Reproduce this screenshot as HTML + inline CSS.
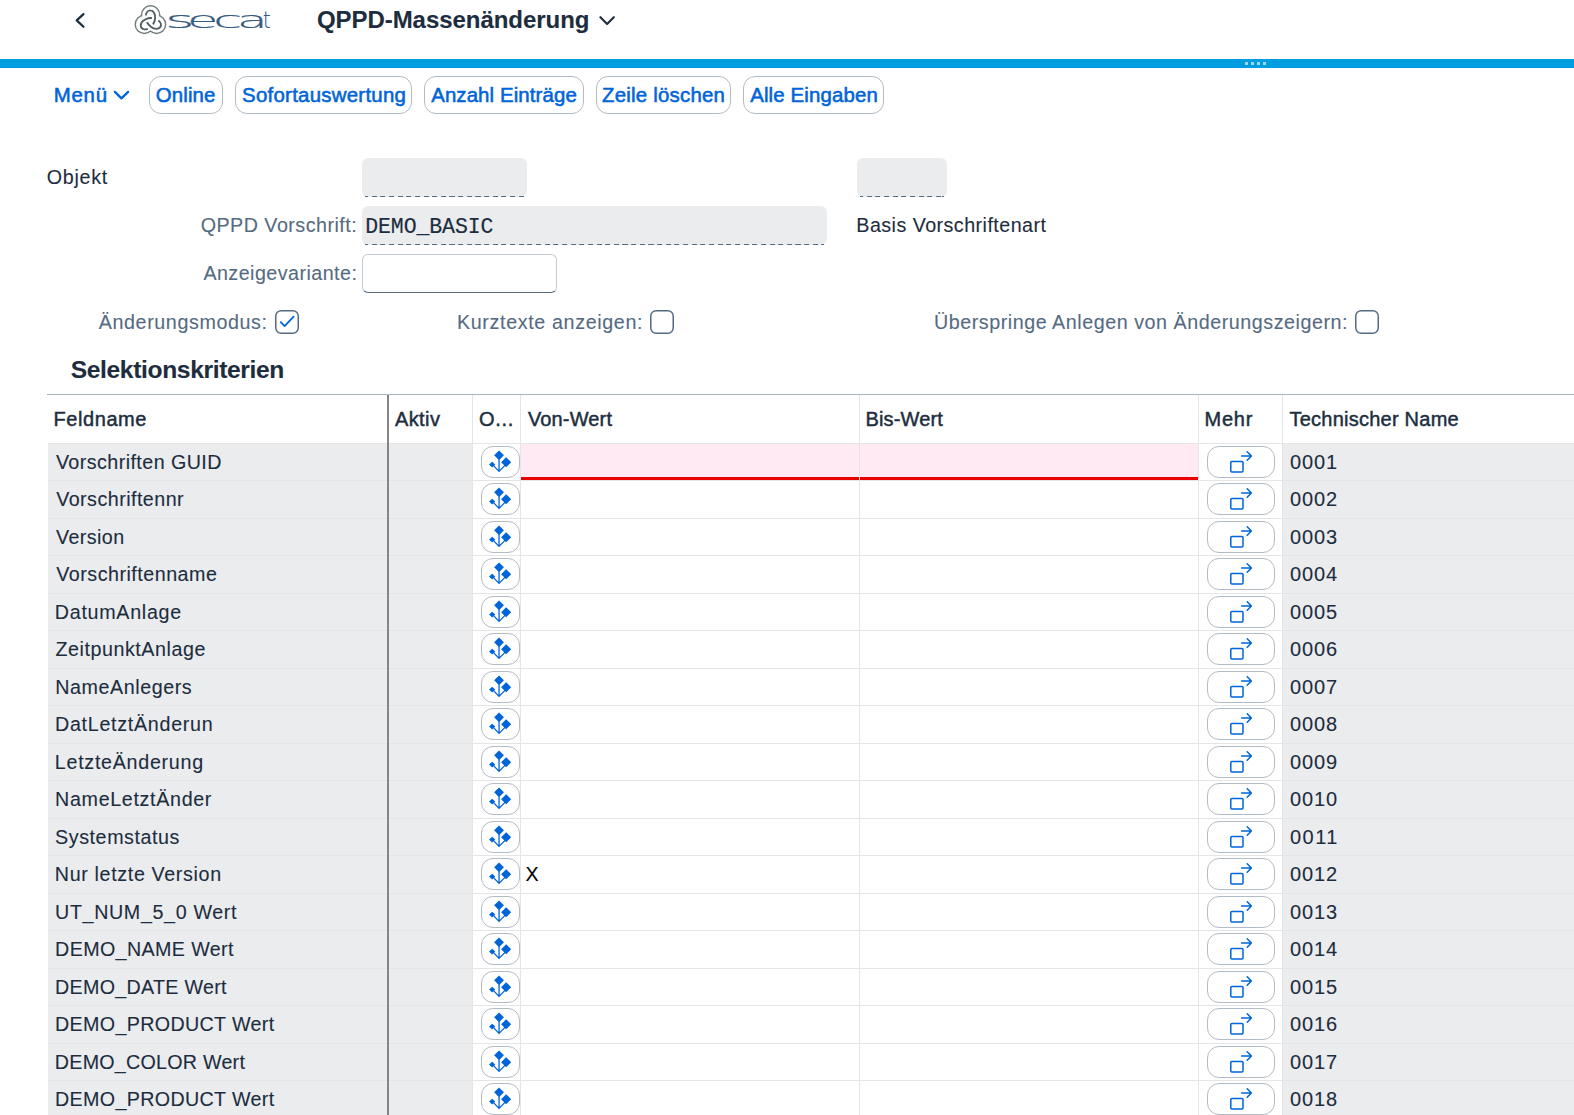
<!DOCTYPE html><html lang="de"><head><meta charset="utf-8"><title>QPPD-Massenänderung</title><style>
*{box-sizing:border-box;margin:0;padding:0}
html,body{width:1574px;height:1115px;overflow:hidden;background:#fff}
body{position:relative;font-family:"Liberation Sans",sans-serif;color:#1d2d3e}
.t{position:absolute;white-space:nowrap;font-size:20px;-webkit-text-stroke:0.1px currentColor}
.b{font-weight:bold}
.sb{-webkit-text-stroke:0.55px currentColor}
.hb{-webkit-text-stroke:0.45px currentColor}
.mono{font-family:"Liberation Mono",monospace;-webkit-text-stroke:0.15px currentColor}
.abs{position:absolute}
.logo{position:absolute;left:0;height:30px;line-height:30px;font-family:'DejaVu Sans Light','DejaVu Sans','Liberation Sans',sans-serif;font-weight:200;color:#34597f;white-space:nowrap;-webkit-text-stroke:0.2px #34597f}
.logo span{position:absolute;top:0;display:block;transform-origin:0 0}
.btn{position:absolute;border:1px solid #b3bbc4;border-radius:12px;background:#fff}
.ro{position:absolute;background:#eaecee;border-radius:6px}
.ro:after{content:"";position:absolute;left:3.2px;right:3px;bottom:0;height:1px;background:repeating-linear-gradient(90deg,#556b82 0,#556b82 5.1px,transparent 5.1px,transparent 8.65px);background-position:-1.9px 0}

.hl{position:absolute;left:48px;right:0;height:1px;background:#e5e5e5}
.vl{position:absolute;width:1px;background:#e5e5e5}
.g{position:absolute;background:#eaecee}
svg{position:absolute;overflow:visible}
</style></head><body>
<svg style="left:70px;top:8px" width="24" height="24" viewBox="70 8 24 24"><path d="M83.5 14.1 L76.7 20.4 L83.5 26.8" fill="none" stroke="#1d2d3e" stroke-width="2.2" stroke-linecap="round" stroke-linejoin="round"/></svg>
<svg style="left:130px;top:0" width="45" height="40" viewBox="130 0 45 40">
<g fill="#737c7e"><circle cx="150.6" cy="14.9" r="9.8"/><circle cx="144.35" cy="24.4" r="9.8"/><circle cx="156.55" cy="24.4" r="9.8"/></g>
<g fill="#fff"><circle cx="150.6" cy="14.9" r="8.4"/><circle cx="144.35" cy="24.4" r="8.4"/><circle cx="156.55" cy="24.4" r="8.4"/><circle cx="150.6" cy="21.3" r="6"/></g>
<g fill="none" stroke="#525d5e" stroke-width="1.9" stroke-linecap="butt" transform="translate(150.63 21.53)">
<path id="lp" d="M-4.84 -6.10 C-4.31 -9.33 -2.15 -11.30 -0.18 -11.12 C2.87 -10.94 5.02 -7.18 4.49 -3.23 C4.23 -0.72 3.41 1.44 2.33 2.87"/>
<use href="#lp" transform="rotate(120)"/><use href="#lp" transform="rotate(240)"/></g>
</svg>
<div class="logo" style="top:4.58px;font-size:22.6px"><span style="left:165.41px;transform:scaleX(2.523)">s</span><span style="left:187.44px;transform:scaleX(2.264)">e</span><span style="left:212.64px;transform:scaleX(2.367)">c</span><span style="left:236.93px;transform:scaleX(2.219)">a</span><span style="left:263.41px;transform:scaleX(0.855)">t</span></div>
<svg style="left:598px;top:14px" width="18" height="14" viewBox="598 14 18 14"><path d="M600.4 17.2 L607.1 23.9 L613.8 17.2" fill="none" stroke="#1d2d3e" stroke-width="2.1" stroke-linecap="round" stroke-linejoin="round"/></svg>
<div class="abs" style="left:0;top:59px;width:1574px;height:9px;background:#009de0"></div>
<div class="abs" style="left:1245px;top:62px;width:3px;height:3px;background:#9fd8f2"></div>
<div class="abs" style="left:1251px;top:62px;width:3px;height:3px;background:#9fd8f2"></div>
<div class="abs" style="left:1257px;top:62px;width:3px;height:3px;background:#9fd8f2"></div>
<div class="abs" style="left:1263px;top:62px;width:3px;height:3px;background:#9fd8f2"></div>
<div class="btn" style="left:149px;top:76px;width:74px;height:38px"></div>
<div class="btn" style="left:235px;top:76px;width:177px;height:38px"></div>
<div class="btn" style="left:424px;top:76px;width:160px;height:38px"></div>
<div class="btn" style="left:596px;top:76px;width:135px;height:38px"></div>
<div class="btn" style="left:743px;top:76px;width:141px;height:38px"></div>
<svg style="left:112px;top:88px" width="20" height="14" viewBox="112 88 20 14"><path d="M114.9 91.9 L121.5 98.4 L128.1 91.9" fill="none" stroke="#0064d9" stroke-width="2.3" stroke-linecap="round" stroke-linejoin="round"/></svg>
<div class="ro" style="left:362px;top:158px;width:165px;height:39px"></div>
<div class="ro" style="left:857px;top:158px;width:90px;height:39px"></div>
<div class="ro" style="left:362px;top:206px;width:465px;height:39px"></div>
<div class="abs" style="left:362px;top:254px;width:195px;height:39px;border:1px solid #c3cad1;border-bottom:1px solid #556b82;border-radius:6px;background:#fff"></div>
<svg style="left:275px;top:310px" width="24" height="24"><rect x="0.75" y="0.75" width="22.5" height="22.5" rx="5.4" fill="#fff" stroke="#556b82" stroke-width="1.5"/></svg>
<svg style="left:275px;top:310px" width="24" height="24" viewBox="275 310 24 24"><path d="M280.8 322.1 L284.6 326.1 L293.6 316.6" fill="none" stroke="#0064d9" stroke-width="1.8" stroke-linecap="round" stroke-linejoin="round"/></svg>
<svg style="left:650px;top:310px" width="24" height="24"><rect x="0.75" y="0.75" width="22.5" height="22.5" rx="5.4" fill="#fff" stroke="#556b82" stroke-width="1.5"/></svg>
<svg style="left:1355px;top:310px" width="24" height="24"><rect x="0.75" y="0.75" width="22.5" height="22.5" rx="5.4" fill="#fff" stroke="#556b82" stroke-width="1.5"/></svg>
<div class="abs" style="left:47px;top:394px;width:1527px;height:1px;background:#a8b3bd"></div>
<div class="g" style="left:48px;top:443px;width:339px;height:672px"></div>
<div class="g" style="left:389px;top:443px;width:83px;height:672px"></div>
<div class="g" style="left:1283px;top:443px;width:291px;height:672px"></div>
<div class="abs" style="left:521px;top:444px;width:677px;height:36px;background:#ffeaf4;border-bottom:3px solid #e90000"></div>
<div class="hl" style="top:443px"></div>
<div class="hl" style="top:480px"></div>
<div class="hl" style="top:518px"></div>
<div class="hl" style="top:555px"></div>
<div class="hl" style="top:593px"></div>
<div class="hl" style="top:630px"></div>
<div class="hl" style="top:668px"></div>
<div class="hl" style="top:705px"></div>
<div class="hl" style="top:743px"></div>
<div class="hl" style="top:780px"></div>
<div class="hl" style="top:818px"></div>
<div class="hl" style="top:855px"></div>
<div class="hl" style="top:893px"></div>
<div class="hl" style="top:930px"></div>
<div class="hl" style="top:968px"></div>
<div class="hl" style="top:1005px"></div>
<div class="hl" style="top:1043px"></div>
<div class="hl" style="top:1080px"></div>
<div class="hl" style="top:1118px"></div>
<div class="vl" style="left:472px;top:395px;height:720px"></div>
<div class="vl" style="left:520px;top:395px;height:720px"></div>
<div class="vl" style="left:859px;top:395px;height:720px"></div>
<div class="vl" style="left:1198px;top:395px;height:720px"></div>
<div class="vl" style="left:1282px;top:395px;height:720px"></div>
<div class="abs" style="left:387px;top:395px;width:2px;height:720px;background:#858585"></div>
<svg width="0" height="0" style="left:0;top:0"><defs><g id="io"><g fill="#0064d9"><path d="M0 -12.9 L4.9 -8 L0 -3.1 L-4.9 -8Z"/><path d="M7.1 -6.1 L12.1 -1.1 L7.1 3.9 L2.1 -1.1Z"/><path d="M-6.9 -1.6 L-3.8 1.25 L-6.9 4.1 L-10.0 1.25Z"/></g><path d="M0 -4 L0 7.4 M-6.0 1.8 L0 8.0 L6.4 1.5" fill="none" stroke="#0064d9" stroke-width="1.3" stroke-linejoin="miter"/></g><g id="im" fill="none" stroke="#0064d9" stroke-width="1.5" stroke-linecap="round" stroke-linejoin="round"><rect x="-10.4" y="-0.3" width="12.2" height="10.6" rx="1"/><path d="M0.4 -5.75 L9.9 -5.75 M6.0 -10.0 L10.2 -5.75 L6.0 -1.5"/></g></defs></svg>
<div class="btn" style="left:481px;top:446px;width:39px;height:32px"></div>
<div class="btn" style="left:1207px;top:446px;width:68px;height:32px"></div>
<svg style="left:499px;top:443px" width="1" height="1"><use href="#io" transform="translate(0.05 20.35)"/></svg>
<svg style="left:1241px;top:443px" width="1" height="1"><use href="#im" transform="translate(0.2 18.8)"/></svg>
<div class="btn" style="left:481px;top:483px;width:39px;height:32px"></div>
<div class="btn" style="left:1207px;top:483px;width:68px;height:32px"></div>
<svg style="left:499px;top:480px" width="1" height="1"><use href="#io" transform="translate(0.05 20.35)"/></svg>
<svg style="left:1241px;top:480px" width="1" height="1"><use href="#im" transform="translate(0.2 18.8)"/></svg>
<div class="btn" style="left:481px;top:521px;width:39px;height:32px"></div>
<div class="btn" style="left:1207px;top:521px;width:68px;height:32px"></div>
<svg style="left:499px;top:518px" width="1" height="1"><use href="#io" transform="translate(0.05 20.35)"/></svg>
<svg style="left:1241px;top:518px" width="1" height="1"><use href="#im" transform="translate(0.2 18.8)"/></svg>
<div class="btn" style="left:481px;top:558px;width:39px;height:32px"></div>
<div class="btn" style="left:1207px;top:558px;width:68px;height:32px"></div>
<svg style="left:499px;top:555px" width="1" height="1"><use href="#io" transform="translate(0.05 20.35)"/></svg>
<svg style="left:1241px;top:555px" width="1" height="1"><use href="#im" transform="translate(0.2 18.8)"/></svg>
<div class="btn" style="left:481px;top:596px;width:39px;height:32px"></div>
<div class="btn" style="left:1207px;top:596px;width:68px;height:32px"></div>
<svg style="left:499px;top:593px" width="1" height="1"><use href="#io" transform="translate(0.05 20.35)"/></svg>
<svg style="left:1241px;top:593px" width="1" height="1"><use href="#im" transform="translate(0.2 18.8)"/></svg>
<div class="btn" style="left:481px;top:633px;width:39px;height:32px"></div>
<div class="btn" style="left:1207px;top:633px;width:68px;height:32px"></div>
<svg style="left:499px;top:630px" width="1" height="1"><use href="#io" transform="translate(0.05 20.35)"/></svg>
<svg style="left:1241px;top:630px" width="1" height="1"><use href="#im" transform="translate(0.2 18.8)"/></svg>
<div class="btn" style="left:481px;top:671px;width:39px;height:32px"></div>
<div class="btn" style="left:1207px;top:671px;width:68px;height:32px"></div>
<svg style="left:499px;top:668px" width="1" height="1"><use href="#io" transform="translate(0.05 20.35)"/></svg>
<svg style="left:1241px;top:668px" width="1" height="1"><use href="#im" transform="translate(0.2 18.8)"/></svg>
<div class="btn" style="left:481px;top:708px;width:39px;height:32px"></div>
<div class="btn" style="left:1207px;top:708px;width:68px;height:32px"></div>
<svg style="left:499px;top:705px" width="1" height="1"><use href="#io" transform="translate(0.05 20.35)"/></svg>
<svg style="left:1241px;top:705px" width="1" height="1"><use href="#im" transform="translate(0.2 18.8)"/></svg>
<div class="btn" style="left:481px;top:746px;width:39px;height:32px"></div>
<div class="btn" style="left:1207px;top:746px;width:68px;height:32px"></div>
<svg style="left:499px;top:743px" width="1" height="1"><use href="#io" transform="translate(0.05 20.35)"/></svg>
<svg style="left:1241px;top:743px" width="1" height="1"><use href="#im" transform="translate(0.2 18.8)"/></svg>
<div class="btn" style="left:481px;top:783px;width:39px;height:32px"></div>
<div class="btn" style="left:1207px;top:783px;width:68px;height:32px"></div>
<svg style="left:499px;top:780px" width="1" height="1"><use href="#io" transform="translate(0.05 20.35)"/></svg>
<svg style="left:1241px;top:780px" width="1" height="1"><use href="#im" transform="translate(0.2 18.8)"/></svg>
<div class="btn" style="left:481px;top:821px;width:39px;height:32px"></div>
<div class="btn" style="left:1207px;top:821px;width:68px;height:32px"></div>
<svg style="left:499px;top:818px" width="1" height="1"><use href="#io" transform="translate(0.05 20.35)"/></svg>
<svg style="left:1241px;top:818px" width="1" height="1"><use href="#im" transform="translate(0.2 18.8)"/></svg>
<div class="btn" style="left:481px;top:858px;width:39px;height:32px"></div>
<div class="btn" style="left:1207px;top:858px;width:68px;height:32px"></div>
<svg style="left:499px;top:855px" width="1" height="1"><use href="#io" transform="translate(0.05 20.35)"/></svg>
<svg style="left:1241px;top:855px" width="1" height="1"><use href="#im" transform="translate(0.2 18.8)"/></svg>
<div class="btn" style="left:481px;top:896px;width:39px;height:32px"></div>
<div class="btn" style="left:1207px;top:896px;width:68px;height:32px"></div>
<svg style="left:499px;top:893px" width="1" height="1"><use href="#io" transform="translate(0.05 20.35)"/></svg>
<svg style="left:1241px;top:893px" width="1" height="1"><use href="#im" transform="translate(0.2 18.8)"/></svg>
<div class="btn" style="left:481px;top:933px;width:39px;height:32px"></div>
<div class="btn" style="left:1207px;top:933px;width:68px;height:32px"></div>
<svg style="left:499px;top:930px" width="1" height="1"><use href="#io" transform="translate(0.05 20.35)"/></svg>
<svg style="left:1241px;top:930px" width="1" height="1"><use href="#im" transform="translate(0.2 18.8)"/></svg>
<div class="btn" style="left:481px;top:971px;width:39px;height:32px"></div>
<div class="btn" style="left:1207px;top:971px;width:68px;height:32px"></div>
<svg style="left:499px;top:968px" width="1" height="1"><use href="#io" transform="translate(0.05 20.35)"/></svg>
<svg style="left:1241px;top:968px" width="1" height="1"><use href="#im" transform="translate(0.2 18.8)"/></svg>
<div class="btn" style="left:481px;top:1008px;width:39px;height:32px"></div>
<div class="btn" style="left:1207px;top:1008px;width:68px;height:32px"></div>
<svg style="left:499px;top:1005px" width="1" height="1"><use href="#io" transform="translate(0.05 20.35)"/></svg>
<svg style="left:1241px;top:1005px" width="1" height="1"><use href="#im" transform="translate(0.2 18.8)"/></svg>
<div class="btn" style="left:481px;top:1046px;width:39px;height:32px"></div>
<div class="btn" style="left:1207px;top:1046px;width:68px;height:32px"></div>
<svg style="left:499px;top:1043px" width="1" height="1"><use href="#io" transform="translate(0.05 20.35)"/></svg>
<svg style="left:1241px;top:1043px" width="1" height="1"><use href="#im" transform="translate(0.2 18.8)"/></svg>
<div class="btn" style="left:481px;top:1083px;width:39px;height:32px"></div>
<div class="btn" style="left:1207px;top:1083px;width:68px;height:32px"></div>
<svg style="left:499px;top:1080px" width="1" height="1"><use href="#io" transform="translate(0.05 20.35)"/></svg>
<svg style="left:1241px;top:1080px" width="1" height="1"><use href="#im" transform="translate(0.2 18.8)"/></svg>
<div class="t b" id="t0" style="left:316.88px;top:3.6px;font-size:24px;line-height:31px;color:#1d2d3e;letter-spacing:-0.046px">QPPD-Massenänderung</div>
<div class="t sb" id="t1" style="left:53.64px;top:81.9px;font-size:20.4px;line-height:26px;color:#0064d9;letter-spacing:0.835px">Menü</div>
<div class="t sb" id="t2" style="left:155.76px;top:81.9px;font-size:20.4px;line-height:26px;color:#0064d9;letter-spacing:0.153px">Online</div>
<div class="t sb" id="t3" style="left:242.10px;top:81.9px;font-size:20.4px;line-height:26px;color:#0064d9;letter-spacing:0.266px">Sofortauswertung</div>
<div class="t sb" id="t4" style="left:431.20px;top:81.9px;font-size:20.4px;line-height:26px;color:#0064d9;letter-spacing:0.115px">Anzahl Einträge</div>
<div class="t sb" id="t5" style="left:602.10px;top:81.9px;font-size:20.4px;line-height:26px;color:#0064d9;letter-spacing:0.219px">Zeile löschen</div>
<div class="t sb" id="t6" style="left:750.20px;top:81.9px;font-size:20.4px;line-height:26px;color:#0064d9;letter-spacing:0.145px">Alle Eingaben</div>
<div class="t " id="t7" style="left:46.86px;top:164.0px;font-size:19.7px;line-height:26px;color:#1d2d3e;letter-spacing:0.671px">Objekt</div>
<div class="t " id="t8" style="left:200.70px;top:211.5px;font-size:19.7px;line-height:26px;color:#556b82;letter-spacing:0.484px">QPPD Vorschrift:</div>
<div class="t " id="t9" style="left:203.38px;top:259.6px;font-size:19.7px;line-height:26px;color:#556b82;letter-spacing:0.455px">Anzeigevariante:</div>
<div class="t " id="t10" style="left:98.74px;top:309.0px;font-size:19.7px;line-height:26px;color:#556b82;letter-spacing:0.603px">Änderungsmodus:</div>
<div class="t " id="t11" style="left:457.00px;top:309.0px;font-size:19.7px;line-height:26px;color:#556b82;letter-spacing:0.637px">Kurztexte anzeigen:</div>
<div class="t " id="t12" style="left:934.00px;top:309.0px;font-size:19.7px;line-height:26px;color:#556b82;letter-spacing:0.541px">Überspringe Anlegen von Änderungszeigern:</div>
<div class="t " id="t13" style="left:856.30px;top:211.5px;font-size:19.7px;line-height:26px;color:#1d2d3e;letter-spacing:0.457px">Basis Vorschriftenart</div>
<div class="t mono" id="t14" style="left:365.26px;top:213.0px;font-size:21.5px;line-height:28px;color:#1d2d3e;letter-spacing:-0.093px">DEMO_BASIC</div>
<div class="t b" id="t15" style="left:70.64px;top:354.1px;font-size:24.6px;line-height:31px;color:#1d2d3e;letter-spacing:-0.350px">Selektionskriterien</div>
<div class="t hb" id="t16" style="left:53.38px;top:405.6px;font-size:20px;line-height:26px;color:#1d2d3e;letter-spacing:0.595px">Feldname</div>
<div class="t hb" id="t17" style="left:395.02px;top:405.6px;font-size:20px;line-height:26px;color:#1d2d3e;letter-spacing:0.384px">Aktiv</div>
<div class="t hb" id="t18" style="left:479.06px;top:405.6px;font-size:20px;line-height:26px;color:#1d2d3e;letter-spacing:0.695px">O...</div>
<div class="t hb" id="t19" style="left:527.96px;top:405.6px;font-size:20px;line-height:26px;color:#1d2d3e;letter-spacing:0.146px">Von-Wert</div>
<div class="t hb" id="t20" style="left:865.54px;top:405.6px;font-size:20px;line-height:26px;color:#1d2d3e;letter-spacing:0.141px">Bis-Wert</div>
<div class="t hb" id="t21" style="left:1204.48px;top:405.6px;font-size:20px;line-height:26px;color:#1d2d3e;letter-spacing:0.787px">Mehr</div>
<div class="t hb" id="t22" style="left:1289.42px;top:405.6px;font-size:20px;line-height:26px;color:#1d2d3e;letter-spacing:0.245px">Technischer Name</div>
<div class="t " id="t23" style="left:55.88px;top:448.8px;font-size:19.7px;line-height:26px;color:#1d2d3e;letter-spacing:0.433px">Vorschriften GUID</div>
<div class="t " id="t24" style="left:1290.00px;top:448.8px;font-size:20px;line-height:26px;color:#1d2d3e;letter-spacing:0.880px">0001</div>
<div class="t " id="t25" style="left:56.18px;top:486.3px;font-size:19.7px;line-height:26px;color:#1d2d3e;letter-spacing:0.462px">Vorschriftennr</div>
<div class="t " id="t26" style="left:1290.00px;top:486.3px;font-size:20px;line-height:26px;color:#1d2d3e;letter-spacing:0.880px">0002</div>
<div class="t " id="t27" style="left:56.06px;top:523.8px;font-size:19.7px;line-height:26px;color:#1d2d3e;letter-spacing:0.395px">Version</div>
<div class="t " id="t28" style="left:1290.00px;top:523.8px;font-size:20px;line-height:26px;color:#1d2d3e;letter-spacing:0.880px">0003</div>
<div class="t " id="t29" style="left:56.30px;top:561.3px;font-size:19.7px;line-height:26px;color:#1d2d3e;letter-spacing:0.494px">Vorschriftenname</div>
<div class="t " id="t30" style="left:1290.00px;top:561.3px;font-size:20px;line-height:26px;color:#1d2d3e;letter-spacing:0.880px">0004</div>
<div class="t " id="t31" style="left:54.80px;top:598.8px;font-size:19.7px;line-height:26px;color:#1d2d3e;letter-spacing:0.712px">DatumAnlage</div>
<div class="t " id="t32" style="left:1290.00px;top:598.8px;font-size:20px;line-height:26px;color:#1d2d3e;letter-spacing:0.880px">0005</div>
<div class="t " id="t33" style="left:55.52px;top:636.3px;font-size:19.7px;line-height:26px;color:#1d2d3e;letter-spacing:0.540px">ZeitpunktAnlage</div>
<div class="t " id="t34" style="left:1290.00px;top:636.3px;font-size:20px;line-height:26px;color:#1d2d3e;letter-spacing:0.880px">0006</div>
<div class="t " id="t35" style="left:55.22px;top:673.8px;font-size:19.7px;line-height:26px;color:#1d2d3e;letter-spacing:0.568px">NameAnlegers</div>
<div class="t " id="t36" style="left:1290.00px;top:673.8px;font-size:20px;line-height:26px;color:#1d2d3e;letter-spacing:0.880px">0007</div>
<div class="t " id="t37" style="left:55.04px;top:711.3px;font-size:19.7px;line-height:26px;color:#1d2d3e;letter-spacing:0.709px">DatLetztÄnderun</div>
<div class="t " id="t38" style="left:1290.00px;top:711.3px;font-size:20px;line-height:26px;color:#1d2d3e;letter-spacing:0.880px">0008</div>
<div class="t " id="t39" style="left:54.86px;top:748.8px;font-size:19.7px;line-height:26px;color:#1d2d3e;letter-spacing:0.709px">LetzteÄnderung</div>
<div class="t " id="t40" style="left:1290.00px;top:748.8px;font-size:20px;line-height:26px;color:#1d2d3e;letter-spacing:0.880px">0009</div>
<div class="t " id="t41" style="left:55.10px;top:786.3px;font-size:19.7px;line-height:26px;color:#1d2d3e;letter-spacing:0.661px">NameLetztÄnder</div>
<div class="t " id="t42" style="left:1290.00px;top:786.3px;font-size:20px;line-height:26px;color:#1d2d3e;letter-spacing:0.880px">0010</div>
<div class="t " id="t43" style="left:55.10px;top:823.8px;font-size:19.7px;line-height:26px;color:#1d2d3e;letter-spacing:0.559px">Systemstatus</div>
<div class="t " id="t44" style="left:1290.00px;top:823.8px;font-size:20px;line-height:26px;color:#1d2d3e;letter-spacing:1.480px">0011</div>
<div class="t " id="t45" style="left:54.86px;top:861.3px;font-size:19.7px;line-height:26px;color:#1d2d3e;letter-spacing:0.638px">Nur letzte Version</div>
<div class="t " id="t46" style="left:1290.00px;top:861.3px;font-size:20px;line-height:26px;color:#1d2d3e;letter-spacing:0.880px">0012</div>
<div class="t " id="t47" style="left:55.04px;top:898.8px;font-size:19.7px;line-height:26px;color:#1d2d3e;letter-spacing:0.643px">UT_NUM_5_0 Wert</div>
<div class="t " id="t48" style="left:1290.00px;top:898.8px;font-size:20px;line-height:26px;color:#1d2d3e;letter-spacing:0.880px">0013</div>
<div class="t " id="t49" style="left:55.04px;top:936.3px;font-size:19.7px;line-height:26px;color:#1d2d3e;letter-spacing:0.379px">DEMO_NAME Wert</div>
<div class="t " id="t50" style="left:1290.00px;top:936.3px;font-size:20px;line-height:26px;color:#1d2d3e;letter-spacing:0.880px">0014</div>
<div class="t " id="t51" style="left:55.04px;top:973.8px;font-size:19.7px;line-height:26px;color:#1d2d3e;letter-spacing:0.289px">DEMO_DATE Wert</div>
<div class="t " id="t52" style="left:1290.00px;top:973.8px;font-size:20px;line-height:26px;color:#1d2d3e;letter-spacing:0.880px">0015</div>
<div class="t " id="t53" style="left:54.98px;top:1011.3px;font-size:19.7px;line-height:26px;color:#1d2d3e;letter-spacing:0.344px">DEMO_PRODUCT Wert</div>
<div class="t " id="t54" style="left:1290.00px;top:1011.3px;font-size:20px;line-height:26px;color:#1d2d3e;letter-spacing:0.880px">0016</div>
<div class="t " id="t55" style="left:54.86px;top:1048.8px;font-size:19.7px;line-height:26px;color:#1d2d3e;letter-spacing:0.238px">DEMO_COLOR Wert</div>
<div class="t " id="t56" style="left:1290.00px;top:1048.8px;font-size:20px;line-height:26px;color:#1d2d3e;letter-spacing:0.880px">0017</div>
<div class="t " id="t57" style="left:54.98px;top:1086.3px;font-size:19.7px;line-height:26px;color:#1d2d3e;letter-spacing:0.344px">DEMO_PRODUCT Wert</div>
<div class="t " id="t58" style="left:1290.00px;top:1086.3px;font-size:20px;line-height:26px;color:#1d2d3e;letter-spacing:0.880px">0018</div>
<div class="t " id="t59" style="left:525.60px;top:861.3px;font-size:19.7px;line-height:26px;color:#000;letter-spacing:0.000px">X</div>
</body></html>
